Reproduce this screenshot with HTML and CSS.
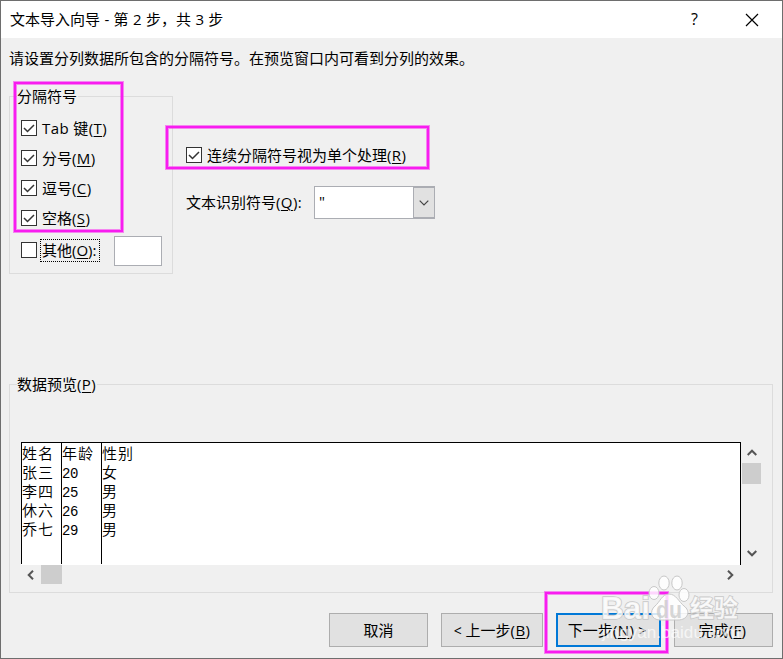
FILE: index.html
```html
<!DOCTYPE html>
<html lang="zh-CN">
<head>
<meta charset="utf-8">
<title>文本导入向导</title>
<link rel="stylesheet" href="styles.css">
</head>
<body>
<div class="dialog">
  <header class="titlebar">
    <h1 class="title">文本导入向导 - 第 2 步，共 3 步</h1>
    <span class="help">?</span>
    <svg class="close" width="14" height="14" viewBox="0 0 14 14"><path d="M1 1L13 13M13 1L1 13"/></svg>
  </header>
  <p class="intro">请设置分列数据所包含的分隔符号。在预览窗口内可看到分列的效果。</p>
  <main class="options">
    <section class="group delimiters">
      <h2 class="legend">分隔符号</h2>
      <label class="check"><svg class="box" viewBox="0 0 16 16"><rect x=".5" y=".5" width="15" height="15"/><path d="M3 8L6.5 11.5L13 5"/></svg><span class="latin">Tab 键(<u>T</u>)</span></label>
      <label class="check"><svg class="box" viewBox="0 0 16 16"><rect x=".5" y=".5" width="15" height="15"/><path d="M3 8L6.5 11.5L13 5"/></svg><span>分号<span class="key">(<u>M</u>)</span></span></label>
      <label class="check"><svg class="box" viewBox="0 0 16 16"><rect x=".5" y=".5" width="15" height="15"/><path d="M3 8L6.5 11.5L13 5"/></svg><span>逗号<span class="key">(<u>C</u>)</span></span></label>
      <label class="check"><svg class="box" viewBox="0 0 16 16"><rect x=".5" y=".5" width="15" height="15"/><path d="M3 8L6.5 11.5L13 5"/></svg><span>空格<span class="key">(<u>S</u>)</span></span></label>
      <div class="check other"><svg class="box" viewBox="0 0 16 16"><rect x=".5" y=".5" width="15" height="15"/></svg><span class="focus">其他(<u>O</u>):</span><span class="field"></span></div>
    </section>
    <section class="settings">
      <label class="check"><svg class="box" viewBox="0 0 16 16"><rect x=".5" y=".5" width="15" height="15"/><path d="M3 8L6.5 11.5L13 5"/></svg><span>连续分隔符号视为单个处理<span class="key">(<u>R</u>)</span></span></label>
      <div class="qualifier">
        <span class="qualifier-label">文本识别符号<span class="key">(<u>Q</u>):</span></span>
        <div class="select"><span class="value">"</span><span class="drop"><svg width="10" height="6" viewBox="0 0 10 6"><path d="M.7 .7L5 5L9.3 .7"/></svg></span></div>
      </div>
    </section>
  </main>
  <section class="group preview">
    <h2 class="legend">数据预览<span class="key">(<u>P</u>)</span></h2>
    <div class="viewport">
      <div class="columns">
        <div class="col"><span>姓名</span><span>张三</span><span>李四</span><span>休六</span><span>乔七</span></div>
        <div class="col"><span>年龄</span><span class="num">20</span><span class="num">25</span><span class="num">26</span><span class="num">29</span></div>
        <div class="col last"><span>性别</span><span>女</span><span>男</span><span>男</span><span>男</span></div>
      </div>
      <div class="vscroll">
        <svg class="arrow" width="10" height="7" viewBox="0 0 10 7"><path d="M.7 6L5 1.7L9.3 6"/></svg>
        <span class="vthumb"></span>
        <svg class="arrow down" width="10" height="7" viewBox="0 0 10 7"><path d="M.7 1L5 5.3L9.3 1"/></svg>
      </div>
    </div>
    <div class="hscroll">
      <svg class="arrow" width="7" height="10" viewBox="0 0 7 10"><path d="M6 .7L1.7 5L6 9.3"/></svg>
      <span class="hthumb"></span>
      <svg class="arrow right" width="7" height="10" viewBox="0 0 7 10"><path d="M1 .7L5.3 5L1 9.3"/></svg>
    </div>
  </section>
  <footer class="actions">
    <button class="btn cancel">取消</button>
    <button class="btn prev"><span class="angle">&lt;</span> 上一步<span class="key">(<u>B</u>)</span></button>
    <button class="btn next">下一步<span class="key">(<u>N</u>)</span> <span class="angle">&gt;</span></button>
    <button class="btn finish">完成<span class="key">(<u>F</u>)</span></button>
  </footer>
  <div class="mark mark-delimiters"></div>
  <div class="mark mark-merge"></div>
  <div class="mark mark-next"></div>
  <svg class="watermark" width="150" height="80" viewBox="0 0 150 80">
    <g class="paw">
      <ellipse cx="68" cy="14" rx="5.2" ry="7"/>
      <ellipse cx="81" cy="14" rx="5.2" ry="7"/>
      <ellipse cx="58" cy="24" rx="5" ry="6.5"/>
      <ellipse cx="88" cy="26" rx="5" ry="6.5"/>
      <path d="M73 25C66 25 64 33 59 37C53 42 55 51 64 51C69 51 78 51 82 51C92 51 95 42 88 37C83 33 80 25 73 25Z"/>
    </g>
    <text class="wm-brand" x="5" y="50" textLength="49" lengthAdjust="spacingAndGlyphs">Bai</text>
    <text class="wm-du" x="60" y="49" textLength="26" lengthAdjust="spacingAndGlyphs">du</text>
    <text class="wm-cn" x="94" y="48" textLength="48" lengthAdjust="spacingAndGlyphs">经验</text>
    <text class="wm-url" x="6" y="69" textLength="138" lengthAdjust="spacingAndGlyphs">jingyan.baidu.com</text>
  </svg>
</div>
</body>
</html>
```
FILE: styles.css
```css
* { box-sizing: border-box; }
body {
  margin: 0;
  font: 400 15px/20px "Open Sans", "Noto Sans CJK SC", sans-serif;
  color: #000;
}
h1, h2, p { margin: 0; font-size: inherit; font-weight: inherit; }
u { text-decoration-thickness: 1px; text-underline-offset: 2px; }
svg { display: block; flex: none; }
.dialog {
  position: relative;
  width: 783px;
  height: 659px;
  border: 1px solid #6e6e6e;
  background: #f0f0f0;
  overflow: hidden;
  white-space: nowrap;
}
.titlebar { display: flex; align-items: center; height: 37px; padding: 0 23px 0 9px; background: #fff; }
.title { flex: 1; padding-bottom: 2px; word-spacing: .5px; }
.help { margin-right: 47px; padding-bottom: 2px; font-size: 16px; }
.close path { fill: none; stroke: #000; stroke-width: 1.2; }
.intro { padding: 10px 8px 0; height: 58px; }
.options { display: flex; height: 288px; padding-left: 8px; }
.group { border: 1px solid #dcdcdc; }
.legend { width: max-content; background: #f0f0f0; padding: 0 1px 0 0; margin: -11px 0 0 7px; }
.delimiters { width: 164px; height: 178px; }
.delimiters .legend { margin-bottom: 7px; }
.key { letter-spacing: .4px; }
.latin { letter-spacing: .4px; }
.check { display: flex; align-items: center; height: 30px; padding-left: 11px; gap: 5px; }
.box { width: 16px; height: 16px; }
.box rect { fill: #fff; stroke: #333; stroke-width: 1; }
.box path { fill: none; stroke: #333; stroke-width: 1.5; }
.other { height: 34px; gap: 3px; }
.focus { border: 1px dotted #000; height: 23px; line-height: 20px; padding: 0 1px; width: 60px; }
.field { width: 48px; height: 30px; margin: 1px 0 0 11px; border: 1px solid #abadb3; background: #fff; }
.settings { padding: 44px 0 0 13px; }
.settings .check { padding: 0; }
.qualifier { display: flex; align-items: center; margin-top: 16px; height: 33px; }
.qualifier-label { width: 128px; padding-bottom: 2px; }
.select { display: flex; width: 121px; height: 33px; border: 1px solid #abadb3; background: #fff; }
.value { flex: 1; padding: 4px 0 0 4px; }
.drop { display: grid; place-items: center; width: 21px; border: 1px solid #abadb3; border-width: 1px 0 1px 1px; background: #e1e1e1; }
.drop path { fill: none; stroke: #444; stroke-width: 1.2; }
.preview { width: 764px; height: 209px; margin-left: 8px; padding: 0 11px; }
.preview .legend { margin: -11px 0 48px -4px; }
.viewport { display: flex; height: 123px; }
.columns {
  display: flex;
  width: 720px;
  border-top: 1px solid #000;
  border-right: 1px solid #000;
  background: #fff;
  font-family: "Liberation Mono", "Noto Sans CJK SC", monospace;
  font-weight: 350;
}
.col { display: flex; flex-direction: column; width: 40px; height: 121px; border-left: 1px solid #000; padding-top: 3px; letter-spacing: 1px; line-height: 19px; }
.col span { height: 19px; }
.col .num { font-size: 14px; letter-spacing: -.4px; }
.last { flex: 1; }
.vscroll { display: flex; flex-direction: column; align-items: center; width: 19px; margin-left: 1px; padding: 7px 0 8px; }
.vthumb { width: 19px; height: 21px; margin-top: 7px; background: #cdcdcd; }
.down { margin-top: auto; }
.arrow path { fill: none; stroke: #555; stroke-width: 2; }
.hscroll { display: flex; align-items: center; width: 720px; height: 19px; padding: 0 7px 0 6px; }
.hthumb { width: 21px; height: 19px; margin-left: 7px; background: #cdcdcd; }
.right { margin-left: auto; }
.actions { display: flex; padding: 20px 0 0 328px; }
.btn { height: 34px; border: 1px solid #adadad; background: #e1e1e1; padding: 0; font: inherit; color: #000; }
.cancel { width: 99px; margin-right: 13px; }
.prev { width: 102px; margin-right: 13px; }
.next { width: 105px; margin-right: 13px; padding-right: 3px; border: 2px solid #0078d7; }
.finish { width: 99px; padding-right: 2px; }
.angle { font-size: 14px; }
.mark { position: absolute; border: 2px solid #f81cf0; box-shadow: 0 0 0 1px rgba(248, 28, 240, .5), inset 0 0 0 1px rgba(248, 28, 240, .5); }
.mark-delimiters { left: 13px; top: 81px; width: 109px; height: 150px; }
.mark-merge { left: 165px; top: 125px; width: 263px; height: 43px; }
.mark-next { left: 544px; top: 591px; width: 123px; height: 61px; }
.watermark { position: absolute; left: 595px; top: 568px; }
.paw { fill: #fff; fill-opacity: .82; stroke: #c8c8c8; stroke-width: 1; }
.watermark text { fill: #fff; fill-opacity: .8; stroke: #c8c8c8; stroke-width: 1.6; paint-order: stroke; }
.wm-brand { font: 700 31px "Liberation Sans", sans-serif; }
.watermark .wm-du { font: 700 23px "Liberation Sans", sans-serif; fill: #ccc; stroke: none; }
.wm-cn { font: 700 24px "Noto Sans CJK SC", sans-serif; }
.watermark .wm-url { font: 16px "Liberation Sans", sans-serif; fill-opacity: .7; stroke: none; }
```
